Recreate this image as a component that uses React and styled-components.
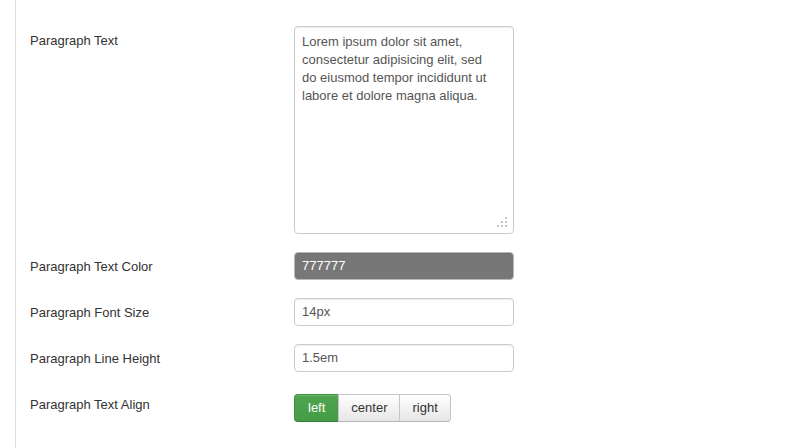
import styled, { createGlobalStyle } from "styled-components"

const GlobalStyle = createGlobalStyle`
    html, body {
        margin: 0;
        padding: 0;
        background: #fff;
    }
    body {
        font-family: "Liberation Sans", Arial, sans-serif;
        font-size: 13px;
        line-height: 18px;
        color: #333;
    }
`
const StyledPanel = styled.div`
    margin-left: 15px;
    border-left: 1px solid #ddd;
    min-height: 448px;
    box-sizing: border-box;
    padding: 26px 0 0 14px;
`
const StyledRow = styled.div`
    display: grid;
    grid-template-columns: 264px 220px;
    margin-bottom: 18px;
`
const StyledLabel = styled.label`
    padding-top: 6px;
    color: #333;
`
const StyledField = styled.div`
    position: relative;
    box-sizing: border-box;
    width: 220px;
    height: ${props => props.$tall ? "208px" : "28px"};
    padding: ${props => props.$tall ? "6px 16px 6px 7px" : "4px 7px"};
    border: 1px solid ${props => props.$fill ? "#bbb" : "#ccc"};
    border-radius: 4px;
    background: ${props => props.$fill || "#fff"};
    color: ${props => props.$fill ? "#fff" : "#555"};
    box-shadow: inset 0 1px 1px rgba(0, 0, 0, 0.075);
    white-space: ${props => props.$tall ? "normal" : "nowrap"};
`
const StyledGrip = styled.svg`
    position: absolute;
    right: 6px;
    bottom: 6px;
`
const StyledGroup = styled.div`
    display: flex;
    margin-top: 4px;
`
const StyledButton = styled.button`
    font-family: inherit;
    font-size: 13px;
    line-height: 18px;
    height: 28px;
    padding: 4px ${props => props.$active ? 13 : 12}px;
    margin: 0;
    margin-left: -1px;
    cursor: pointer;
    color: ${props => props.$active ? "#fff" : "#333"};
    background: ${props => props.$active
        ? "linear-gradient(#4fa54f, #469c46)"
        : "linear-gradient(#fff, #e6e6e6)"};
    border: 1px solid ${props => props.$active ? "#3f8f3f" : "#c5c5c5"};
    border-bottom-color: ${props => props.$active ? "#357a35" : "#b3b3b3"};
    border-radius: 0;
    box-shadow: inset 0 1px 0 rgba(255, 255, 255, 0.2);
    &:first-child {
        margin-left: 0;
        border-radius: 4px 0 0 4px;
    }
    &:last-child {
        border-radius: 0 4px 4px 0;
    }
`

const Grip = () => (
    <StyledGrip width="10" height="10" viewBox="0 0 10 10">
        {[[8, 0], [4, 4], [8, 4], [0, 8], [4, 8], [8, 8]].map(([x, y]) => (
            <rect key={`${x}-${y}`} x={x} y={y} width="2" height="2" fill="#c4c4c4" />
        ))}
    </StyledGrip>
)

const App = () => {
    return (
        <>
            <GlobalStyle />
            <StyledPanel>
                <StyledRow>
                    <StyledLabel>Paragraph Text</StyledLabel>
                    <StyledField $tall>
                        Lorem ipsum dolor sit amet, consectetur adipisicing elit, sed do eiusmod tempor incididunt ut labore et dolore magna aliqua.
                        <Grip />
                    </StyledField>
                </StyledRow>
                <StyledRow>
                    <StyledLabel>Paragraph Text Color</StyledLabel>
                    <StyledField $fill="#777">777777</StyledField>
                </StyledRow>
                <StyledRow>
                    <StyledLabel>Paragraph Font Size</StyledLabel>
                    <StyledField>14px</StyledField>
                </StyledRow>
                <StyledRow>
                    <StyledLabel>Paragraph Line Height</StyledLabel>
                    <StyledField>1.5em</StyledField>
                </StyledRow>
                <StyledRow>
                    <StyledLabel>Paragraph Text Align</StyledLabel>
                    <StyledGroup>
                        <StyledButton $active>left</StyledButton>
                        <StyledButton>center</StyledButton>
                        <StyledButton>right</StyledButton>
                    </StyledGroup>
                </StyledRow>
            </StyledPanel>
        </>
    )
}

export default App
